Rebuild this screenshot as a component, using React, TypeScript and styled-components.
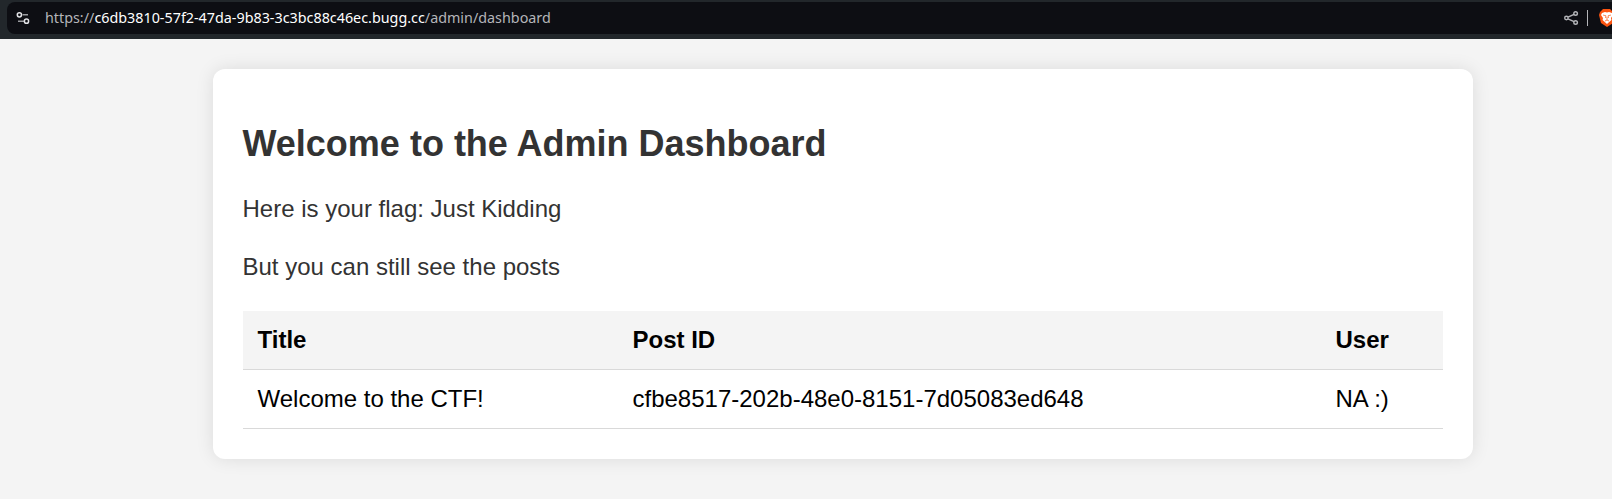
import React from 'react';
import styled, { createGlobalStyle } from 'styled-components';

const GlobalStyle = createGlobalStyle`
  * { box-sizing: border-box; }
  body { margin: 0; background: #f4f4f4; font-family: "Liberation Sans", Arial, sans-serif; font-size: 24px; overflow: hidden; }
`;
const Page = styled.div`height: 499px; overflow: hidden; background: #f4f4f4;`;
const Bar = styled.header`
  height: 39px; background: #22272b; padding: 2px 0 5px 7px;
`;
const Address = styled.div`
  height: 32px; background: #0d0e13; border-radius: 8px 0 0 8px; display: flex; align-items: center;
  padding-left: 8px; font: 14.33px/20px "Noto Sans", sans-serif; color: #b4b5b9;
`;
const Icon = styled.svg`flex: none; display: block;`;
const Url = styled.span`margin-left: 14px; flex: 1; white-space: nowrap;`;
const Host = styled.span`color: #fff;`;
const Divider = styled.i`width: 1px; height: 16px; background: #b4b5b9; margin: 0 11px 0 8px;`;
const Card = styled.main`
  width: 1260px; height: 390px; margin: 30px 0 0 212.5px; padding: 30px; background: #fff; border-radius: 12px;
  box-shadow: 0 0 18px rgba(0,0,0,.1);
`;
const Title = styled.h1`margin: 24px 0 31px; font-size: 36px; line-height: 41px; color: #333;`;
const Text = styled.p`margin: 0 0 30px; line-height: 28px; color: #333;`;
const Table = styled.table`width: 100%; border-collapse: separate; border-spacing: 0; color: #000;`;
const Cell = styled.td`padding: 15px; line-height: 28px; border-bottom: 1px solid #d9d9d9; text-align: left;`;
const Head = styled(Cell)`background: #f4f4f4; font-weight: bold;`;

export default function App() {
  return (
    <Page>
      <GlobalStyle />
      <Bar>
        <Address>
          <Icon width="16" height="16" viewBox="0 0 16 16" fill="none" stroke="#e2e3e6" strokeWidth="1.5">
            <circle cx="4.4" cy="4.8" r="2.1" /><path d="M7.5 4.8h5.5M3 11.2h6" stroke="#9b9ca0" /><circle cx="11.5" cy="11.2" r="2.1" />
          </Icon>
          <Url>https://<Host>c6db3810-57f2-47da-9b83-3c3bc88c46ec.bugg.cc</Host>/admin/dashboard</Url>
          <Icon width="16" height="16" viewBox="0 0 16 16" fill="none" stroke="#b4b5b9" strokeWidth="1.4">
            <circle cx="3.4" cy="8" r="1.7" /><circle cx="12.6" cy="3.5" r="1.8" /><circle cx="12.6" cy="12.5" r="1.8" /><path d="M5 7.2l6-2.9M5 8.8l6 2.9" />
          </Icon>
          <Divider />
          <Icon width="13" height="18" viewBox="0 0 13 18">
            <path d="M4 0h7l2 2 2 1 1 3-2 8-6 4-6-4-2-8 1-3z" fill="#fb5410" />
            <path d="M3 4l3-1 2 .6L10 3l3 1 1 2-2 3 .4 2L8 15l-4.4-4L4 9 2 6z" fill="#fff" />
            <path d="M4 6l3 .8L6.5 9M12 6l-3 .8.5 2.2M8 8v3M6 12l2-1 2 1" fill="none" stroke="#fb5410" strokeWidth=".7" />
          </Icon>
        </Address>
      </Bar>
      <Card>
        <Title>Welcome to the Admin Dashboard</Title>
        <Text>Here is your flag: Just Kidding</Text>
        <Text>But you can still see the posts</Text>
        <Table>
          <colgroup><col style={{ width: 375 }} /><col style={{ width: 703 }} /><col /></colgroup>
          <thead><tr><Head as="th">Title</Head><Head as="th">Post ID</Head><Head as="th">User</Head></tr></thead>
          <tbody><tr><Cell>Welcome to the CTF!</Cell><Cell>cfbe8517-202b-48e0-8151-7d05083ed648</Cell><Cell>NA :)</Cell></tr></tbody>
        </Table>
      </Card>
    </Page>
  );
}
